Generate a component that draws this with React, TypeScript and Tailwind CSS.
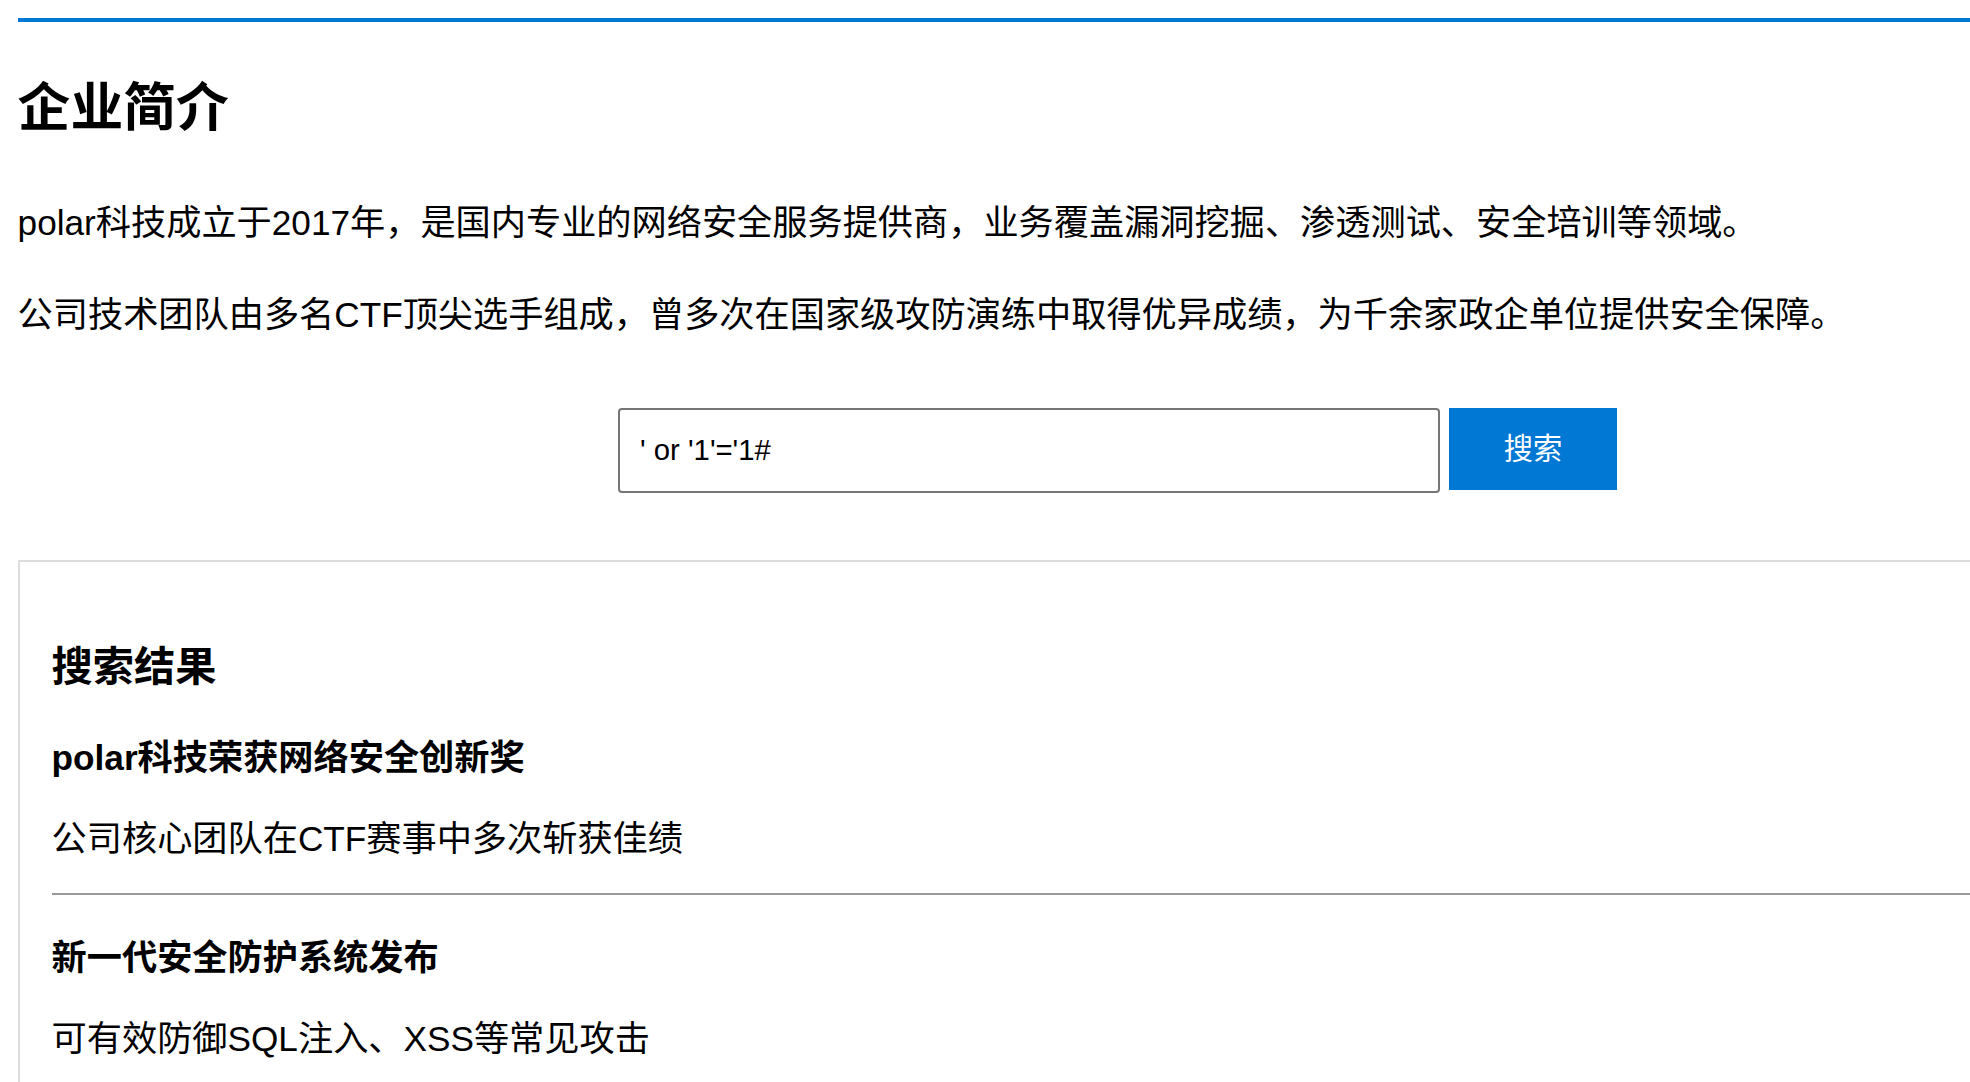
const results = [
  { title: 'polar科技荣获网络安全创新奖', text: '公司核心团队在CTF赛事中多次斩获佳绩' },
  { title: '新一代安全防护系统发布', text: '可有效防御SQL注入、XSS等常见攻击' },
];

function App(): JSX.Element {
  return (
    <div className="h-screen w-full overflow-hidden bg-white text-black font-['Liberation_Sans','Noto_Sans_CJK_SC',sans-serif]">
      <div className="w-[2200px] ml-[17.6px] pt-[17.6px]">
        <header className="h-[4.4px] bg-[#0078d4]" />

        <h2 className="mt-[51px] text-[52.8px] leading-[70px] font-bold">企业简介</h2>
        <p className="mt-[52px] text-[35.2px] leading-[56px]">
          polar科技成立于2017年，是国内专业的网络安全服务提供商，业务覆盖漏洞挖掘、渗透测试、安全培训等领域。
        </p>
        <p className="mt-[36px] text-[35.2px] leading-[56px]">
          公司技术团队由多名CTF顶尖选手组成，曾多次在国家级攻防演练中取得优异成绩，为千余家政企单位提供安全保障。
        </p>

        <form className="mt-[65px] flex items-start justify-center gap-[9px]">
          <input
            type="text"
            defaultValue="' or '1'='1#"
            className="w-[822px] h-[85px] border-2 border-[#767676] rounded-[4px] px-[20px] text-[29.3px] text-black outline-none"
          />
          <button type="button" className="w-[168px] h-[82px] bg-[#0078d4] text-white text-[29.3px]">
            搜索
          </button>
        </form>

        <section className="mt-[67px] border-2 border-[#ddd] pl-[32px] pt-[77px] pb-[40px]">
          <h3 className="text-[41.2px] leading-[56px] font-bold">搜索结果</h3>
          {results.map((item, i) => (
            <div key={i} className={i === 0 ? 'mt-[35px] border-b-2 border-[#999] pb-[26px]' : 'mt-[35px] pb-[26px]'}>
              <h4 className="text-[35.2px] leading-[56px] font-bold">{item.title}</h4>
              <p className="mt-[25px] text-[35.2px] leading-[56px]">{item.text}</p>
            </div>
          ))}
        </section>
      </div>
    </div>
  );
}

export default App;
